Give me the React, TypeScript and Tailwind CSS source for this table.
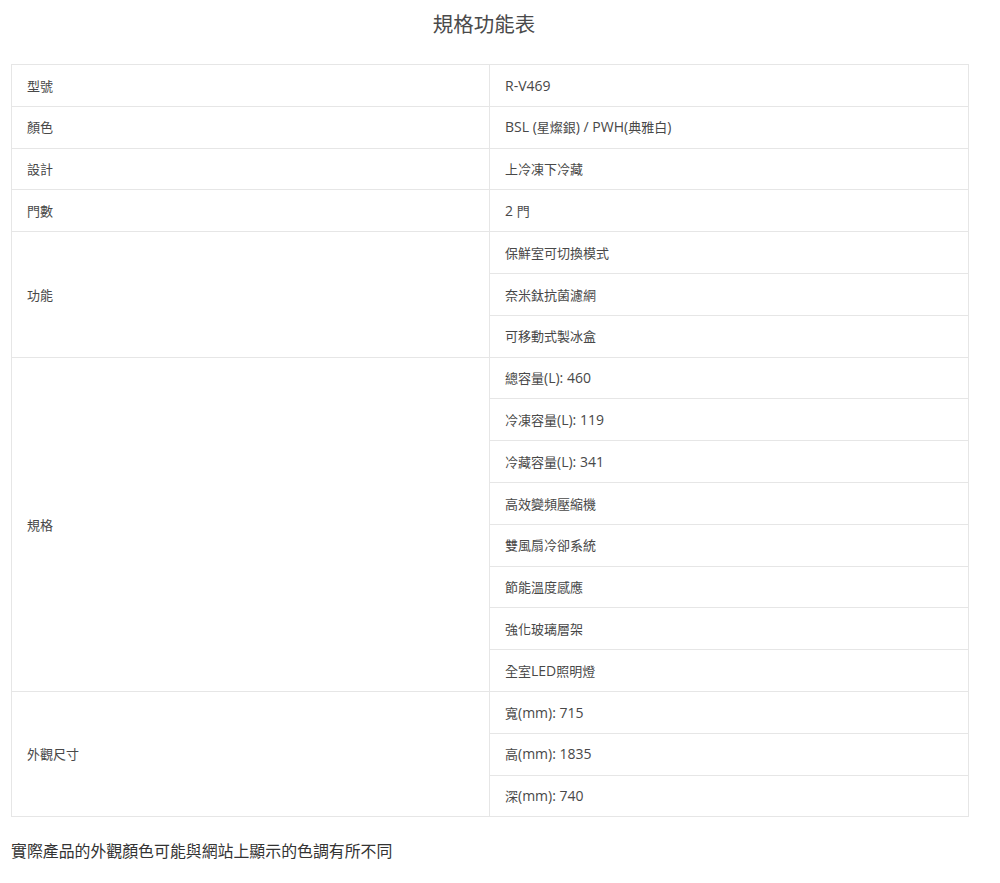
import React from "react";

type Group = { label: string; values: string[] };

const groups: Group[] = [
  { label: "型號", values: ["R-V469"] },
  { label: "顏色", values: ["BSL (星燦銀) / PWH(典雅白)"] },
  { label: "設計", values: ["上冷凍下冷藏"] },
  { label: "門數", values: ["2 門"] },
  { label: "功能", values: ["保鮮室可切換模式", "奈米鈦抗菌濾網", "可移動式製冰盒"] },
  {
    label: "規格",
    values: [
      "總容量(L): 460",
      "冷凍容量(L): 119",
      "冷藏容量(L): 341",
      "高效變頻壓縮機",
      "雙風扇冷卻系統",
      "節能溫度感應",
      "強化玻璃層架",
      "全室LED照明燈",
    ],
  },
  { label: "外觀尺寸", values: ["寬(mm): 715", "高(mm): 1835", "深(mm): 740"] },
];

function Mixed({ text }: { text: string }) {
  const parts = text.split(/([\u3000-\u9fff\uf900-\ufaff]+)/).filter((p) => p.length > 0);
  return (
    <>
      {parts.map((p, i) =>
        /[\u3000-\u9fff\uf900-\ufaff]/.test(p) ? (
          <span key={i} className="text-[13px]">
            {p}
          </span>
        ) : (
          <span key={i}>{p}</span>
        )
      )}
    </>
  );
}

export default function App() {
  return (
    <div
      className="bg-white w-[1000px] min-h-[883px] text-[#444]"
      style={{ fontFamily: '"Open Sans", "Noto Sans CJK TC", sans-serif' }}
    >
      <div className="ml-[11px] w-[958px]">
        <h1 className="h-[64px] pt-[9px] text-center text-[20.5px] leading-[30px] text-[#4a4a4a] pr-[12px]">
          規格功能表
        </h1>
        <table className="w-[958px] border-collapse text-[14px] text-[#484848]">
          <tbody>
            {groups.map((g) =>
              g.values.map((v, i) => (
                <tr key={g.label + i} className="h-[41.8px]">
                  {i === 0 && (
                    <td
                      rowSpan={g.values.length}
                      className="w-[478px] border border-[#e6e6e6] px-[15px] align-middle"
                    >
                      <Mixed text={g.label} />
                    </td>
                  )}
                  <td className="border border-[#e6e6e6] px-[15px] align-middle">
                    <Mixed text={v} />
                  </td>
                </tr>
              ))
            )}
          </tbody>
        </table>
        <p className="mt-[22px] text-[15.9px] leading-[24px] text-[#333]">
          實際產品的外觀顏色可能與網站上顯示的色調有所不同
        </p>
      </div>
    </div>
  );
}
